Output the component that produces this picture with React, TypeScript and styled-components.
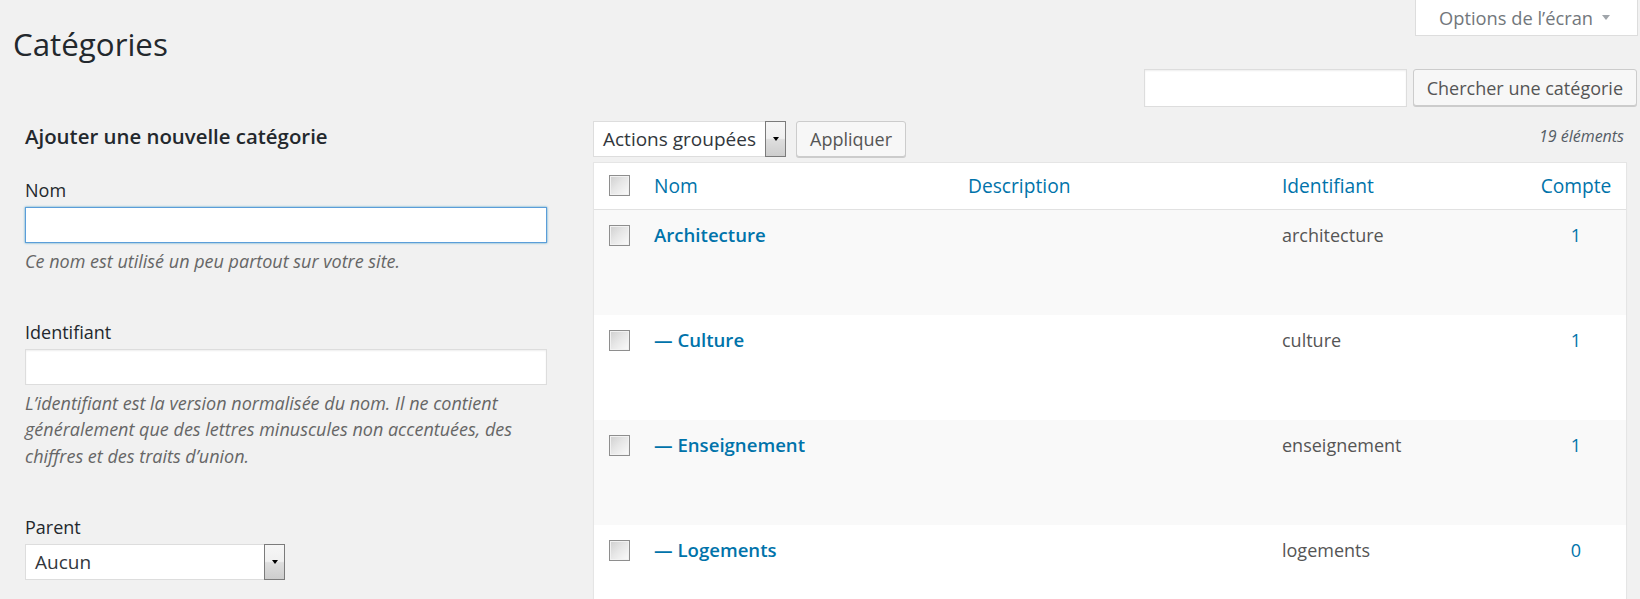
import React from "react";
import styled, { createGlobalStyle } from "styled-components";

const GlobalStyle = createGlobalStyle`
  html, body { margin: 0; padding: 0; background: #f1f1f1; overflow: hidden; }
  body {
    font-family: "Open Sans", "Noto Sans", sans-serif;
    color: #444;
    font-size: 18px;
  }
  * { box-sizing: border-box; }
`;

const Page = styled.div`
  height: 599px;
  overflow: hidden;
  padding: 0 2px 0 13px;
`;

const TopBar = styled.div`
  display: flex;
  justify-content: space-between;
  align-items: flex-start;
`;

const Title = styled.h1`
  margin: 25px 0 0;
  font-size: 31.3px;
  font-weight: 400;
  line-height: 39px;
  color: #23282d;
`;

const ScreenOptions = styled.div`
  display: flex;
  align-items: center;
  gap: 9px;
  height: 36px;
  padding: 0 27px 0 23px;
  background: #fff;
  border: 1px solid #ddd;
  border-top: none;
  color: #72777c;
  font-size: 18.3px;
  line-height: 24px;
  &::after {
    content: "";
    border-left: 4px solid transparent;
    border-right: 4px solid transparent;
    border-top: 5px solid #a0a5aa;
  }
`;

const SearchRow = styled.div`
  display: flex;
  justify-content: flex-end;
  align-items: flex-start;
  gap: 6px;
  height: 38px;
  margin-top: 5px;
  padding-right: 1px;
`;

const SearchInput = styled.div`
  width: 263px;
  height: 38px;
  background: #fff;
  border: 1px solid #ddd;
  box-shadow: inset 0 1px 2px rgba(0, 0, 0, 0.07);
`;

const Button = styled.div<{ $tall?: boolean }>`
  display: flex;
  align-items: center;
  height: ${(p) => (p.$tall ? "37px" : "36px")};
  padding: 0 13px;
  background: #f7f7f7;
  border: 1px solid #ccc;
  border-radius: 3px;
  box-shadow: 0 1px 0 #ccc;
  color: #555;
  font-size: 18px;
  white-space: nowrap;
`;

const Columns = styled.div`
  display: grid;
  grid-template-columns: 580px 1fr;
`;

const ColLeft = styled.div`
  padding-left: 12px;
`;

const ColRight = styled.div`
  padding-right: 11px;
`;

const FormTitle = styled.h2`
  margin: 15px 0 0;
  font-size: 20.4px;
  font-weight: 600;
  line-height: 29px;
  color: #23282d;
`;

const Field = styled.div<{ $first?: boolean }>`
  margin-top: ${(p) => (p.$first ? "27px" : "45px")};
  width: 522px;
`;

const Label = styled.div`
  font-size: 18px;
  line-height: 24px;
  color: #23282d;
`;

const TextInput = styled.div<{ $focused?: boolean }>`
  margin-top: 5px;
  height: 36px;
  background: #fff;
  border: 1px solid ${(p) => (p.$focused ? "#5b9dd9" : "#ddd")};
  box-shadow: ${(p) =>
    p.$focused
      ? "0 0 2px rgba(30, 140, 190, 0.8)"
      : "inset 0 1px 2px rgba(0, 0, 0, 0.07)"};
`;

const Description = styled.p`
  margin: 5px 0 0;
  font-style: italic;
  color: #666;
  font-size: 18px;
  line-height: 26.7px;
`;

const Select = styled.div<{ $width: number }>`
  display: flex;
  align-items: center;
  width: ${(p) => p.$width}px;
  height: 36px;
  padding-left: 9px;
  background: #fff;
  border: 1px solid #ddd;
  font-size: 19px;
  color: #32373c;
  white-space: nowrap;
`;

const SelectParent = styled(Select)`
  margin-top: 5px;
`;

const SelectArrow = styled.span`
  display: flex;
  align-items: center;
  justify-content: center;
  align-self: stretch;
  width: 21px;
  margin: -1px -1px -1px auto;
  border: 1px solid #7b7b7b;
  background: linear-gradient(#f6f6f6 0%, #f0f0f0 48%, #dedede 52%, #cdcdcd 100%);
  &::after {
    content: "";
    border-left: 3px solid transparent;
    border-right: 3px solid transparent;
    border-top: 4px solid #000;
  }
`;

const Toolbar = styled.div`
  display: flex;
  align-items: center;
  gap: 10px;
  height: 36px;
  margin-top: 14px;
`;

const ItemCount = styled.span`
  align-self: flex-start;
  margin: 3px 3px 0 auto;
  line-height: 24px;
  font-size: 16px;
  font-style: italic;
  color: #555d66;
`;

const Table = styled.div`
  margin-top: 5px;
  background: #fff;
  border: 1px solid #e5e5e5;
  border-bottom: none;
  box-shadow: 0 1px 1px rgba(0, 0, 0, 0.04);
`;

const gridCols = "48px 314px 314px 1fr 100px";

const HeadRow = styled.div`
  display: grid;
  grid-template-columns: ${gridCols};
  height: 47px;
  border-bottom: 1px solid #e1e1e1;
`;

const Row = styled.div<{ $alt?: boolean }>`
  display: grid;
  grid-template-columns: ${gridCols};
  height: 105px;
  background: ${(p) => (p.$alt ? "#f9f9f9" : "#fff")};
`;

const CheckCell = styled.div<{ $head?: boolean }>`
  padding: ${(p) => (p.$head ? "12px" : "15px")} 0 0 15px;
`;

const Checkbox = styled.span`
  display: block;
  width: 21px;
  height: 21px;
  border: 1px solid #8e8e8e;
  background: linear-gradient(135deg, #cfcfcf 0%, #e6e6e6 45%, #fbfbfb 100%);
  box-shadow: inset 0 0 0 1px #f2f2f2;
`;

const HeadCell = styled.div<{ $center?: boolean }>`
  padding: 9.5px 12px 0;
  font-size: 19.2px;
  line-height: 26px;
  color: #0073aa;
  white-space: nowrap;
  text-align: ${(p) => (p.$center ? "center" : "left")};
`;

const NameCell = styled.div`
  padding: 11.5px 12px 0;
  font-size: 18.6px;
  font-weight: 600;
  line-height: 26px;
  color: #0073aa;
`;

const Cell = styled.div<{ $center?: boolean; $link?: boolean }>`
  padding: 12px 12px 0;
  font-size: 18px;
  line-height: 26px;
  color: ${(p) => (p.$link ? "#0073aa" : "#555")};
  text-align: ${(p) => (p.$center ? "center" : "left")};
`;

const rows = [
  { name: "Architecture", slug: "architecture", count: 1 },
  { name: "— Culture", slug: "culture", count: 1 },
  { name: "— Enseignement", slug: "enseignement", count: 1 },
  { name: "— Logements", slug: "logements", count: 0 },
];

export default function App() {
  return (
    <>
      <GlobalStyle />
      <Page>
        <TopBar>
          <Title>Catégories</Title>
          <ScreenOptions>Options de l’écran</ScreenOptions>
        </TopBar>
        <SearchRow>
          <SearchInput />
          <Button $tall>Chercher une catégorie</Button>
        </SearchRow>
        <Columns>
          <ColLeft>
            <FormTitle>Ajouter une nouvelle catégorie</FormTitle>
            <Field $first>
              <Label>Nom</Label>
              <TextInput $focused />
              <Description>Ce nom est utilisé un peu partout sur votre site.</Description>
            </Field>
            <Field>
              <Label>Identifiant</Label>
              <TextInput />
              <Description>
                L’identifiant est la version normalisée du nom. Il ne contient
                généralement que des lettres minuscules non accentuées, des
                chiffres et des traits d’union.
              </Description>
            </Field>
            <Field>
              <Label>Parent</Label>
              <SelectParent $width={260}>
                Aucun
                <SelectArrow />
              </SelectParent>
            </Field>
          </ColLeft>
          <ColRight>
            <Toolbar>
              <Select $width={193}>
                Actions groupées
                <SelectArrow />
              </Select>
              <Button>Appliquer</Button>
              <ItemCount>19 éléments</ItemCount>
            </Toolbar>
            <Table>
              <HeadRow>
                <CheckCell $head>
                  <Checkbox />
                </CheckCell>
                <HeadCell>Nom</HeadCell>
                <HeadCell>Description</HeadCell>
                <HeadCell>Identifiant</HeadCell>
                <HeadCell $center>Compte</HeadCell>
              </HeadRow>
              {rows.map((r, i) => (
                <Row key={r.slug} $alt={i % 2 === 0}>
                  <CheckCell>
                    <Checkbox />
                  </CheckCell>
                  <NameCell>{r.name}</NameCell>
                  <Cell />
                  <Cell>{r.slug}</Cell>
                  <Cell $center $link>
                    {r.count}
                  </Cell>
                </Row>
              ))}
            </Table>
          </ColRight>
        </Columns>
      </Page>
    </>
  );
}
